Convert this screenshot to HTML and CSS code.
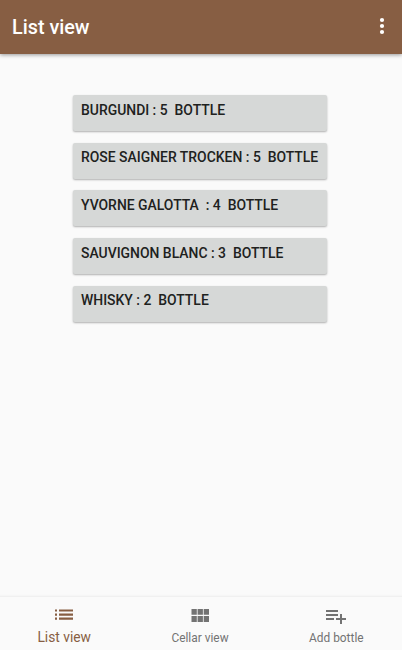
FILE: index.html
```html
<!DOCTYPE html>
<html lang="en">
<head>
  <meta charset="UTF-8" />
  <meta name="viewport" content="width=device-width, initial-scale=1.0"/>
  <title>List view</title>
  <link rel="stylesheet" href="styles.css">
</head>
<body>
  <header class="toolbar">
    <h1 class="title">List view</h1>
    <button class="menu" aria-label="More options">
      <svg viewBox="0 0 24 24"><circle cx="12" cy="6" r="2.1"/><circle cx="12" cy="12" r="2.1"/><circle cx="12" cy="18" r="2.1"/></svg>
    </button>
  </header>

  <main class="list">
    <button class="bottle"><span class="label">BURGUNDI : 5  BOTTLE</span></button>
    <button class="bottle"><span class="label">ROSE SAIGNER TROCKEN : 5  BOTTLE</span></button>
    <button class="bottle"><span class="label">YVORNE GALOTTA  : 4  BOTTLE</span></button>
    <button class="bottle"><span class="label">SAUVIGNON BLANC : 3  BOTTLE</span></button>
    <button class="bottle"><span class="label">WHISKY : 2  BOTTLE</span></button>
  </main>

  <nav class="tabs">
    <a class="tab active">
      <svg viewBox="0 0 24 24"><path d="M3 12.7h2v-2.2H3v2.2zm0 4.1h2v-2.2H3v2.2zm0-8.2h2V6.4H3v2.2zM7 12.7h14v-2.2H7v2.2zm0 4.1h14v-2.2H7v2.2zM7 6.4v2.2h14V6.4H7z"/></svg>
      <span>List view</span>
    </a>
    <a class="tab">
      <svg viewBox="0 0 24 24"><path d="M3.500 10.800h5.300V5H3.500v5.800zm0 7.200h5.300v-6H3.500v6zm6.100 0h5.300v-6H9.600v6zm6.100 0H21v-6h-5.300v6zM9.600 10.800h5.300V5H9.600v5.800zM15.700 5v5.800H21V5h-5.300z"/></svg>
      <span>Cellar view</span>
    </a>
    <a class="tab">
      <svg viewBox="0 0 24 24"><path d="M14 10H2v2h12v-2zm0-4H2v2h12V6zm4 8v-4h-2v4h-4v2h4v4h2v-4h4v-2h-4zM2 16h8v-2H2v2z"/></svg>
      <span>Add bottle</span>
    </a>
  </nav>
</body>
</html>
```

FILE: styles.css
```css
* {
  box-sizing: border-box;
}

body {
  margin: 0;
  height: 100vh;
  display: flex;
  flex-direction: column;
  overflow: hidden;
  background: #fafafa;
  font-family: Roboto, sans-serif;
}

.toolbar {
  display: flex;
  align-items: center;
  justify-content: space-between;
  height: 54px;
  padding: 0 8px 2px 12px;
  background: #875e43;
  color: #fff;
  box-shadow: 0 1px 4px rgba(0,0,0,0.4);
}

.title {
  margin: 0;
  padding-top: 2px;
  font-size: 19.8px;
  font-weight: 500;
}

.menu {
  display: flex;
  padding: 0;
  border: none;
  background: none;
}

.menu svg {
  width: 24px;
  height: 24px;
  fill: #fff;
}

.list {
  flex: 1;
  display: flex;
  flex-direction: column;
  align-items: center;
  gap: 11.7px;
  padding: 41px 2px 0 0;
}

.bottle {
  width: 254px;
  height: 36px;
  display: flex;
  align-items: flex-start;
  padding: 5.5px 8px 0;
  border: none;
  border-radius: 2px;
  background: #d6d8d7;
  box-shadow: 0 1px 2px rgba(0,0,0,0.3);
  color: #202120;
  font-family: inherit;
  font-size: 13.93px;
  font-weight: 500;
  line-height: 18px;
}

.label {
  white-space: pre;
}

.tabs {
  display: grid;
  grid-template-columns: repeat(3, 1fr);
  height: 53px;
  margin: 0 -3px 0 -4px;
  background: #fafafa;
  box-shadow: 0 -1px 2px rgba(0,0,0,0.06);
}

.tab {
  display: flex;
  flex-direction: column;
  align-items: center;
  gap: 2px;
  padding-top: 7px;
  color: #737373;
  font-size: 11.9px;
  line-height: 16px;
}

.tab:not(.active) {
  padding-right: 1px;
}

.tab svg {
  width: 24px;
  height: 24px;
  fill: currentColor;
}

.tab.active {
  padding-top: 6px;
  color: #875e43;
  font-size: 13.8px;
}
```
